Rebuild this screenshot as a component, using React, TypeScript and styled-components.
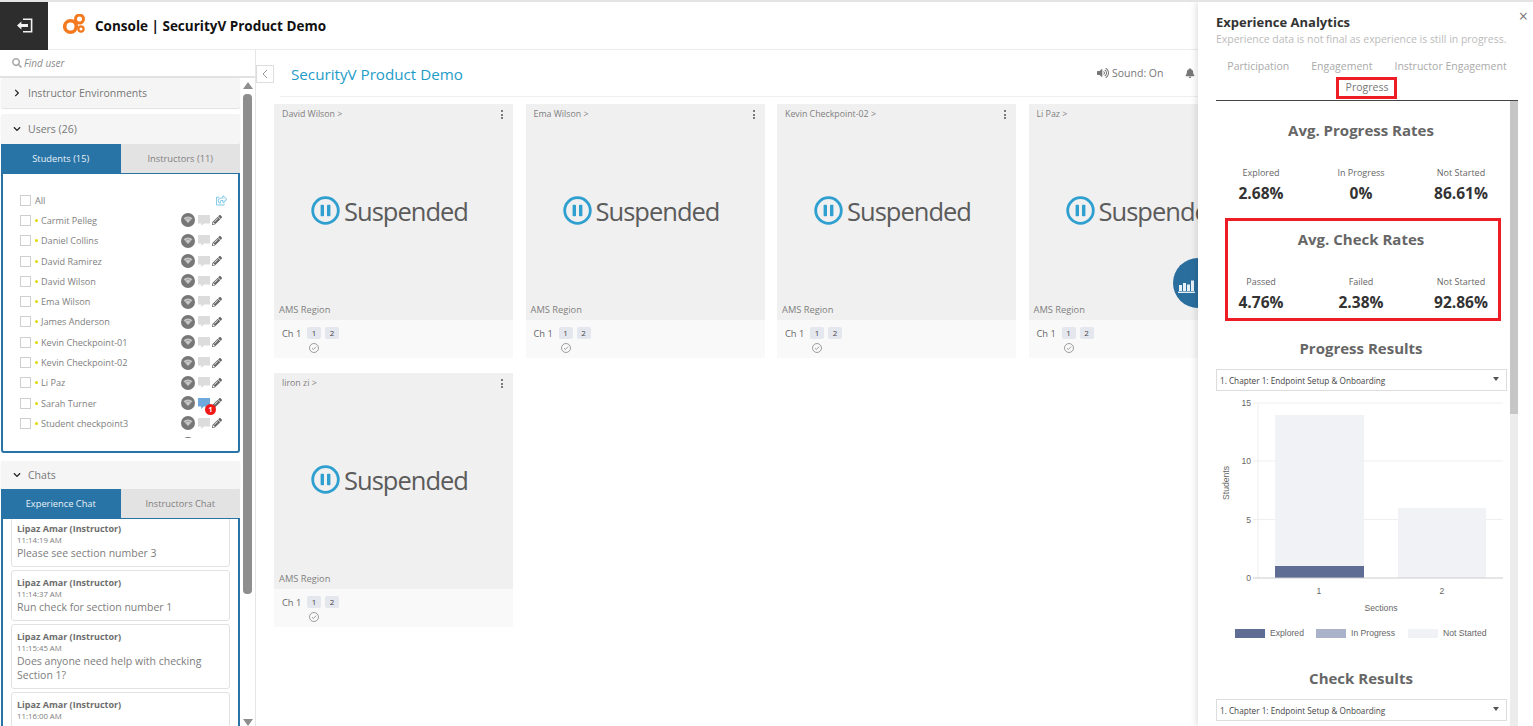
import React from "react";
import styled, { createGlobalStyle } from "styled-components";
import {
  FaBell,
  FaChevronDown,
  FaChevronRight,
  FaPencilAlt,
  FaRegShareSquare,
  FaSearch,
  FaVolumeUp,
} from "react-icons/fa";

const GlobalStyle = createGlobalStyle`
  html, body {
    margin: 0;
    padding: 0;
    width: 1533px;
    height: 726px;
    overflow: hidden;
    background: #fff;
    font-family: "Open Sans", "Liberation Sans", sans-serif;
  }
  * { box-sizing: border-box; }
`;

const Page = styled.div`
  position: relative;
  width: 1533px;
  height: 726px;
  overflow: hidden;
  border-top: 2px solid #e4e4e4;
  display: flex;
  flex-direction: column;
`;

const TopBar = styled.header`
  height: 48px;
  flex: none;
  display: flex;
  align-items: center;
  border-bottom: 1px solid #ececec;
`;

const BackButton = styled.div`
  width: 48px;
  height: 48px;
  background: #2d2d2d;
  display: flex;
  align-items: center;
  justify-content: center;
`;

const Logo = styled.svg`
  margin-left: 15px;
  width: 23px;
  height: 23px;
`;

const AppTitle = styled.div`
  margin-left: 9px;
  font-size: 13.5px;
  font-weight: 700;
  color: #111;
`;

const Body = styled.div`
  flex: 1;
  display: flex;
  min-height: 0;
`;

const Sidebar = styled.aside`
  width: 256px;
  flex: none;
  border-right: 1px solid #e6e6e6;
  display: flex;
  flex-direction: column;
`;

const FindUser = styled.div`
  height: 28px;
  flex: none;
  display: flex;
  align-items: center;
  gap: 2px;
  padding-left: 12px;
  font-size: 10px;
  font-style: italic;
  color: #8d8d8d;
  border-bottom: 2px solid #e2e2e2;
  svg {
    color: #aaa;
    font-size: 10px;
  }
`;

const SideColumns = styled.div`
  flex: 1;
  display: flex;
  min-height: 0;
`;

const Accordions = styled.div`
  width: 240px;
  flex: none;
  padding: 0 0 0 1px;
  display: flex;
  flex-direction: column;
`;

const Scrollbar = styled.div`
  width: 15px;
  display: flex;
  flex-direction: column;
  align-items: center;
  padding-top: 4px;
`;

const ArrowUp = styled.div`
  width: 0;
  height: 0;
  border-left: 5px solid transparent;
  border-right: 5px solid transparent;
  border-bottom: 7px solid #8e8e8e;
`;

const ArrowDown = styled.div`
  width: 0;
  height: 0;
  margin-top: 125px;
  border-left: 5px solid transparent;
  border-right: 5px solid transparent;
  border-top: 7px solid #8e8e8e;
`;

const ScrollThumb = styled.div`
  width: 9px;
  height: 501px;
  margin-top: 5px;
  border-radius: 4px;
  background: #8e8e8e;
`;

const AccordionHead = styled.div<{ $gap?: number; $height?: number }>`
  height: ${(p) => p.$height ?? 30}px;
  flex: none;
  margin-top: ${(p) => p.$gap ?? 0}px;
  background: #f5f5f5;
  display: flex;
  align-items: center;
  gap: 7px;
  padding-left: 12px;
  font-size: 10.5px;
  color: #777;
  border-radius: 2px;
  box-shadow: 0 1px 1px #e2e2e2;
  svg {
    color: #222;
    font-size: 8px;
    width: 8px;
  }
`;

const Tabs = styled.div`
  height: 29px;
  flex: none;
  display: flex;
`;

const SideTab = styled.div<{ $active?: boolean }>`
  flex: 1;
  display: flex;
  align-items: center;
  justify-content: center;
  font-size: 9.3px;
  color: ${(p) => (p.$active ? "#e8f1f7" : "#808080")};
  background: ${(p) => (p.$active ? "#2874a6" : "#e4e3e3")};
`;

const ListBox = styled.div`
  height: 280px;
  flex: none;
  border: 2px solid #2874a6;
  border-top-width: 1px;
  border-radius: 0 0 3px 3px;
  padding: 16px 0 0 17px;
`;

const UserList = styled.div`
  height: 248px;
  overflow: hidden;
`;

const UserRow = styled.div`
  height: 20.3px;
  display: flex;
  align-items: center;
  font-size: 9.1px;
  color: #808080;
`;

const Check = styled.span`
  width: 11px;
  height: 11px;
  flex: none;
  border: 1px solid #cfcfcf;
  background: #fff;
  margin-right: 4px;
`;

const Dot = styled.span`
  width: 3px;
  height: 3px;
  margin-right: 3px;
  border-radius: 50%;
  background: #e0d800;
`;

const UserName = styled.span`
  flex: 1;
`;

const ExternalLink = styled.span`
  margin-right: 11px;
  color: #7fc8e8;
  font-size: 11px;
  display: flex;
`;

const RowIcons = styled.span`
  position: relative;
  display: flex;
  align-items: center;
  width: 45px;
  margin-right: 12px;
  gap: 3px;
  svg.pencil {
    color: #666;
    font-size: 10px;
    margin-left: -1px;
  }
`;

const Badge = styled.span`
  position: absolute;
  left: 24px;
  top: 8px;
  width: 11px;
  height: 11px;
  border-radius: 50%;
  background: #f01818;
  color: #fff;
  font-size: 7px;
  font-weight: 700;
  line-height: 11px;
  text-align: center;
`;

const ChatBox = styled.div`
  flex: 1;
  min-height: 0;
  overflow: hidden;
  border: 2px solid #2874a6;
  border-top-width: 1px;
  border-bottom: none;
  padding: 0 8px;
`;

const ChatCard = styled.div<{ $first?: boolean }>`
  margin-top: ${(p) => (p.$first ? -3 : 3)}px;
  padding: 6px 5px 5.4px;
  border: 1px solid #e2e2e2;
  border-radius: 3px;
  color: #7d7d7d;
`;

const ChatAuthor = styled.div`
  font-size: 9px;
  font-weight: 700;
  line-height: 12px;
  color: #6d6d6d;
`;

const ChatTime = styled.div`
  font-size: 7.8px;
  line-height: 10px;
`;

const ChatText = styled.div`
  margin-top: 1px;
  font-size: 10.5px;
  line-height: 14.5px;
`;

const Main = styled.main`
  flex: 1;
  min-width: 0;
  display: flex;
  flex-direction: column;
`;

const TitleBar = styled.div`
  height: 47px;
  flex: none;
  display: flex;
  align-items: center;
`;

const CollapseButton = styled.div`
  width: 18px;
  height: 18px;
  flex: none;
  margin-top: 1px;
  border: 1px solid #ddd;
  color: #999;
  display: flex;
  align-items: center;
  justify-content: center;
`;

const TitleInner = styled.div`
  flex: 1;
  height: 100%;
  margin-left: 6px;
  padding-left: 11px;
  border-bottom: 1px solid #efefef;
  display: flex;
  align-items: center;
`;

const DemoTitle = styled.div`
  font-size: 15.2px;
  padding-top: 1px;
  color: #1e9cc8;
  width: 806px;
`;

const Sound = styled.div`
  display: flex;
  align-items: center;
  gap: 3px;
  font-size: 10.5px;
  color: #777;
  width: 88px;
  svg {
    font-size: 12px;
    color: #777;
  }
`;

const BellIcon = styled(FaBell)`
  color: #777;
  font-size: 10px;
`;

const CardGrid = styled.div`
  display: grid;
  grid-template-columns: repeat(4, 239px);
  column-gap: 12.5px;
  row-gap: 15px;
  padding: 7px 0 0 18px;
`;

const Card = styled.article`
  height: 254px;
  display: flex;
  flex-direction: column;
`;

const CardScreen = styled.div`
  position: relative;
  height: 216px;
  flex: none;
  background: #f0f0f0;
  display: flex;
  align-items: center;
  justify-content: center;
  gap: 4px;
  padding: 0 8px 3px 0;
`;

const CardName = styled.div`
  position: absolute;
  left: 8px;
  top: 4px;
  font-size: 8.8px;
  color: #808080;
`;

const CardMenu = styled.div`
  position: absolute;
  right: 10px;
  top: 6px;
  display: flex;
  flex-direction: column;
  gap: 1.5px;
  i {
    width: 2px;
    height: 2px;
    border-radius: 50%;
    background: #555;
  }
`;

const CardRegion = styled.div`
  position: absolute;
  left: 5px;
  bottom: 4px;
  font-size: 9.3px;
  color: #808080;
`;

const SuspendedText = styled.div`
  font-size: 25.5px;
  letter-spacing: -1px;
  color: #5b5b5b;
`;

const CardFooter = styled.div`
  flex: 1;
  background: #f9f9f9;
  padding: 6px 0 0 8px;
  display: grid;
  grid-template-columns: 25px 18px 18px;
  grid-template-rows: 14px 12px;
  align-items: center;
  font-size: 9.3px;
  color: #666;
`;

const Chip = styled.span`
  width: 14px;
  height: 12px;
  border-radius: 2px;
  background: #e4e7ee;
  font-size: 8px;
  line-height: 12px;
  text-align: center;
  color: #444;
`;

const CheckedIcon = styled.svg`
  grid-column: 2;
  grid-row: 2;
  width: 10px;
  height: 10px;
  margin: 3px 0 0 2px;
`;

const Fab = styled.div`
  position: absolute;
  left: 1173px;
  top: 256px;
  width: 50px;
  height: 50px;
  border-radius: 50%;
  background: #2a6e9e;
  padding: 18px 0 0 5px;
`;

const Panel = styled.section`
  position: absolute;
  top: 0;
  right: 0;
  bottom: 0;
  width: 335px;
  background: #fff;
  box-shadow: -2px 0 6px rgba(0, 0, 0, 0.12);
  padding: 12px 15px 0 18px;
  display: flex;
  flex-direction: column;
`;

const CloseX = styled.div`
  position: absolute;
  right: 5px;
  top: 6px;
  font-size: 16px;
  line-height: 16px;
  color: #777;
`;

const PanelTitle = styled.div`
  font-size: 13px;
  font-weight: 700;
  line-height: 17px;
  color: #333;
`;

const PanelHint = styled.div`
  font-size: 10.45px;
  line-height: 16px;
  color: #bbb;
  white-space: nowrap;
`;

const PanelTabs = styled.div`
  margin-top: 9px;
  height: 45px;
  flex: none;
  display: flex;
  flex-wrap: wrap;
  justify-content: center;
  align-content: flex-start;
  column-gap: 22px;
  border-bottom: 1px solid #444;
`;

const PanelTab = styled.div<{ $active?: boolean }>`
  position: relative;
  height: 21px;
  line-height: 21px;
  font-size: 10.5px;
  color: ${(p) => (p.$active ? "#777" : "#aaa")};
`;

const TabHighlight = styled.div`
  position: absolute;
  left: -10px;
  right: -9px;
  top: 0;
  bottom: -1px;
  border: 3px solid #ee1c25;
`;

const PanelBody = styled.div`
  flex: 1;
  min-height: 0;
  display: flex;
`;

const PanelContent = styled.div`
  flex: 1;
  min-width: 0;
  padding: 18px 4px 0 0;
  overflow: hidden;
`;

const PanelTrack = styled.div`
  width: 8px;
  flex: none;
  background: #ececec;
`;

const PanelThumb = styled.div`
  height: 313px;
  background: #c6c6c6;
`;

const Section = styled.div`
  position: relative;
  margin-bottom: 24px;
`;

const Heading = styled.h3`
  margin: 0;
  font-size: 15px;
  font-weight: 700;
  line-height: 22px;
  color: #666;
  text-align: center;
`;

const ResultsHeading = styled(Heading)`
  margin-top: 1px;
`;

const StatGrid = styled.div`
  margin-top: 25px;
  display: grid;
  grid-template-columns: repeat(3, 80px);
  column-gap: 20px;
  justify-content: center;
  text-align: center;
`;

const StatLabel = styled.div`
  font-size: 9px;
  line-height: 14px;
  color: #666;
  white-space: nowrap;
`;

const StatValue = styled.div`
  margin-top: 2px;
  font-size: 15.5px;
  font-weight: 700;
  line-height: 22px;
  color: #333;
  white-space: nowrap;
`;

const RedFrame = styled.div`
  position: absolute;
  left: 9px;
  right: 5px;
  top: -10px;
  bottom: -8px;
  border: 3px solid #ee1c25;
`;

const SelectBox = styled.div`
  margin-top: 10px;
  height: 22px;
  width: 291px;
  flex: none;
  border: 1px solid #ddd;
  display: flex;
  align-items: center;
  justify-content: space-between;
  padding: 0 7px 0 3px;
  font-size: 8.2px;
  color: #444;
`;

const Caret = styled.span`
  width: 0;
  height: 0;
  margin-bottom: 3px;
  border-left: 3.5px solid transparent;
  border-right: 3.5px solid transparent;
  border-top: 4px solid #555;
`;

const Chart = styled.svg`
  display: block;
  width: 294px;
  height: 258px;
  margin-bottom: 18px;
  text {
    font-family: "Liberation Sans", Arial, sans-serif;
    font-size: 8.6px;
    fill: #666;
  }
`;

const ExitIcon = () => (
  <svg width="17" height="15" viewBox="0 0 17 15" fill="none">
    <path d="M7 1.2h8.6v12.6H7" stroke="#f2f2f2" strokeWidth="1.6" />
    <path d="M1 7.5l4.4-4v2.4h6.6v3.2H5.4v2.4z" fill="#f2f2f2" />
  </svg>
);

const BrandLogo = () => (
  <Logo viewBox="0 0 23 23" fill="none" stroke="#f47a20">
    <circle cx="7.5" cy="12.5" r="5.8" strokeWidth="3.6" />
    <circle cx="16.5" cy="5" r="4" strokeWidth="3" />
    <circle cx="18" cy="15" r="2.6" strokeWidth="2.2" />
  </Logo>
);

const WifiIcon = () => (
  <svg width="14" height="14" viewBox="0 0 14 14">
    <circle cx="7" cy="7" r="7" fill="#777" />
    <path d="M2.6 5.2a6.4 6.4 0 0 1 8.8 0L7 10z" fill="#c8c8c8" />
    <path d="M4.4 6.4a3.8 3.8 0 0 1 5.2 0" stroke="#888" strokeWidth="0.6" fill="none" />
  </svg>
);

const BubbleIcon = ({ active }: { active?: boolean }) => (
  <svg width="12" height="13" viewBox="0 0 12 13">
    <path d="M0 1h12v8.4H6L3.2 12V9.4H0z" fill={active ? "#6ea8dc" : "#dcdcdc"} />
  </svg>
);

const PauseIcon = () => (
  <svg width="29" height="29" viewBox="0 0 29 29" fill="none">
    <circle cx="14.5" cy="14.5" r="12.8" stroke="#2f9fd0" strokeWidth="2.8" />
    <rect x="9.6" y="8.8" width="3.4" height="11.4" rx="0.8" fill="#2f9fd0" />
    <rect x="16" y="8.8" width="3.4" height="11.4" rx="0.8" fill="#2f9fd0" />
  </svg>
);

// the last name is cut off by the list's scroll area, only its icon top shows
const students = [
  "Carmit Pelleg",
  "Daniel Collins",
  "David Ramirez",
  "David Wilson",
  "Ema Wilson",
  "James Anderson",
  "Kevin Checkpoint-01",
  "Kevin Checkpoint-02",
  "Li Paz",
  "Sarah Turner",
  "Student checkpoint3",
  "",
];

const chats = [
  { time: "11:14:19 AM", text: "Please see section number 3" },
  { time: "11:14:37 AM", text: "Run check for section number 1" },
  { time: "11:15:45 AM", text: "Does anyone need help with checking Section 1?" },
  { time: "11:16:00 AM", text: "" },
];

const cards = ["David Wilson", "Ema Wilson", "Kevin Checkpoint-02", "Li Paz", "liron zi"];

const gridLines = [
  { y: 12, label: "15" },
  { y: 70, label: "10" },
  { y: 128.6, label: "5" },
];

const legend = [
  { x: 19, color: "#5f6d95", label: "Explored" },
  { x: 100, color: "#aab2c9", label: "In Progress" },
  { x: 192, color: "#f1f2f6", label: "Not Started" },
];

const ProgressChart = () => (
  <Chart viewBox="0 0 294 258">
    {gridLines.map((g) => (
      <g key={g.label}>
        <line x1="37" x2="287" y1={g.y} y2={g.y} stroke="#eeeeee" />
        <text x="35" y={g.y + 3} textAnchor="end">
          {g.label}
        </text>
      </g>
    ))}
    <line x1="42" x2="42" y1="12" y2="187" stroke="#eeeeee" />
    <rect x="59" y="24" width="89" height="163" fill="#f1f2f6" />
    <rect x="59" y="175" width="89" height="12" fill="#5f6d95" />
    <rect x="182" y="117" width="88" height="70" fill="#f1f2f6" />
    <line x1="37" x2="287" y1="187" y2="187" stroke="#cccccc" />
    <text x="35" y="190" textAnchor="end">
      0
    </text>
    <text x="103" y="203" textAnchor="middle">
      1
    </text>
    <text x="226" y="203" textAnchor="middle">
      2
    </text>
    <text x="165" y="220" textAnchor="middle">
      Sections
    </text>
    <text transform="translate(13 92) rotate(-90)" textAnchor="middle">
      Students
    </text>
    {legend.map((l) => (
      <g key={l.label}>
        <rect x={l.x} y="238" width="30" height="9" fill={l.color} />
        <text x={l.x + 35} y="244.5">
          {l.label}
        </text>
      </g>
    ))}
  </Chart>
);

const CardItem = ({ name }: { name: string }) => (
  <Card>
    <CardScreen>
      <CardName>{name} &gt;</CardName>
      <CardMenu>
        <i />
        <i />
        <i />
      </CardMenu>
      <PauseIcon />
      <SuspendedText>Suspended</SuspendedText>
      <CardRegion>AMS Region</CardRegion>
    </CardScreen>
    <CardFooter>
      <span>Ch 1</span>
      <Chip>1</Chip>
      <Chip>2</Chip>
      <CheckedIcon viewBox="0 0 10 10" fill="none" stroke="#777" strokeWidth="0.7">
        <circle cx="5" cy="5" r="4.5" />
        <path d="M3 5.2l1.4 1.3L7.2 3.6" />
      </CheckedIcon>
    </CardFooter>
  </Card>
);

export default function App() {
  return (
    <Page>
      <GlobalStyle />
      <TopBar>
        <BackButton>
          <ExitIcon />
        </BackButton>
        <BrandLogo />
        <AppTitle>Console | SecurityV Product Demo</AppTitle>
      </TopBar>
      <Body>
        <Sidebar>
          <FindUser>
            <FaSearch />
            Find user
          </FindUser>
          <SideColumns>
            <Accordions>
              <AccordionHead>
                <FaChevronRight />
                Instructor Environments
              </AccordionHead>
              <AccordionHead $gap={6}>
                <FaChevronDown />
                Users (26)
              </AccordionHead>
              <Tabs>
                <SideTab $active>Students (15)</SideTab>
                <SideTab>Instructors (11)</SideTab>
              </Tabs>
              <ListBox>
                <UserList>
                  <UserRow>
                    <Check />
                    <UserName>All</UserName>
                    <ExternalLink>
                      <FaRegShareSquare />
                    </ExternalLink>
                  </UserRow>
                  {students.map((name) => (
                    <UserRow key={name}>
                      <Check />
                      <Dot />
                      <UserName>{name}</UserName>
                      <RowIcons>
                        <WifiIcon />
                        <BubbleIcon active={name === "Sarah Turner"} />
                        <FaPencilAlt className="pencil" />
                        {name === "Sarah Turner" && <Badge>1</Badge>}
                      </RowIcons>
                    </UserRow>
                  ))}
                </UserList>
              </ListBox>
              <AccordionHead $gap={8} $height={28}>
                <FaChevronDown />
                Chats
              </AccordionHead>
              <Tabs>
                <SideTab $active>Experience Chat</SideTab>
                <SideTab>Instructors Chat</SideTab>
              </Tabs>
              <ChatBox>
                {chats.map((c, i) => (
                  <ChatCard key={c.time} $first={i === 0}>
                    <ChatAuthor>Lipaz Amar (Instructor)</ChatAuthor>
                    <ChatTime>{c.time}</ChatTime>
                    <ChatText>{c.text}</ChatText>
                  </ChatCard>
                ))}
              </ChatBox>
            </Accordions>
            <Scrollbar>
              <ArrowUp />
              <ScrollThumb />
              <ArrowDown />
            </Scrollbar>
          </SideColumns>
        </Sidebar>
        <Main>
          <TitleBar>
            <CollapseButton>
              <svg width="6" height="10" viewBox="0 0 6 10" fill="none" stroke="currentColor">
                <path d="M5 1L1 5l4 4" />
              </svg>
            </CollapseButton>
            <TitleInner>
              <DemoTitle>SecurityV Product Demo</DemoTitle>
              <Sound>
                <FaVolumeUp />
                Sound: On
              </Sound>
              <BellIcon />
            </TitleInner>
          </TitleBar>
          <CardGrid>
            {cards.map((name) => (
              <CardItem key={name} name={name} />
            ))}
          </CardGrid>
        </Main>
      </Body>
      <Fab>
        <svg width="17" height="13" viewBox="0 0 17 13" fill="#e6f0f6">
          <rect x="1" y="5" width="3" height="6" />
          <rect x="5" y="3" width="3" height="8" />
          <rect x="9" y="4.5" width="3" height="6.5" />
          <rect x="13" y="0.5" width="3" height="10.5" />
          <rect x="0" y="11.6" width="17" height="1.4" />
        </svg>
      </Fab>
      <Panel>
        <CloseX>×</CloseX>
        <PanelTitle>Experience Analytics</PanelTitle>
        <PanelHint>Experience data is not final as experience is still in progress.</PanelHint>
        <PanelTabs>
          <PanelTab>Participation</PanelTab>
          <PanelTab>Engagement</PanelTab>
          <PanelTab>Instructor Engagement</PanelTab>
          <PanelTab $active>
            Progress
            <TabHighlight />
          </PanelTab>
        </PanelTabs>
        <PanelBody>
          <PanelContent>
            <Section>
              <Heading>Avg. Progress Rates</Heading>
              <StatGrid>
                <div>
                  <StatLabel>Explored</StatLabel>
                  <StatValue>2.68%</StatValue>
                </div>
                <div>
                  <StatLabel>In Progress</StatLabel>
                  <StatValue>0%</StatValue>
                </div>
                <div>
                  <StatLabel>Not Started</StatLabel>
                  <StatValue>86.61%</StatValue>
                </div>
              </StatGrid>
            </Section>
            <Section>
              <Heading>Avg. Check Rates</Heading>
              <StatGrid>
                <div>
                  <StatLabel>Passed</StatLabel>
                  <StatValue>4.76%</StatValue>
                </div>
                <div>
                  <StatLabel>Failed</StatLabel>
                  <StatValue>2.38%</StatValue>
                </div>
                <div>
                  <StatLabel>Not Started</StatLabel>
                  <StatValue>92.86%</StatValue>
                </div>
              </StatGrid>
              <RedFrame />
            </Section>
            <ResultsHeading>Progress Results</ResultsHeading>
            <SelectBox>
              1. Chapter 1: Endpoint Setup &amp; Onboarding
              <Caret />
            </SelectBox>
            <ProgressChart />
            <Heading>Check Results</Heading>
            <SelectBox>
              1. Chapter 1: Endpoint Setup &amp; Onboarding
              <Caret />
            </SelectBox>
          </PanelContent>
          <PanelTrack>
            <PanelThumb />
          </PanelTrack>
        </PanelBody>
      </Panel>
    </Page>
  );
}
